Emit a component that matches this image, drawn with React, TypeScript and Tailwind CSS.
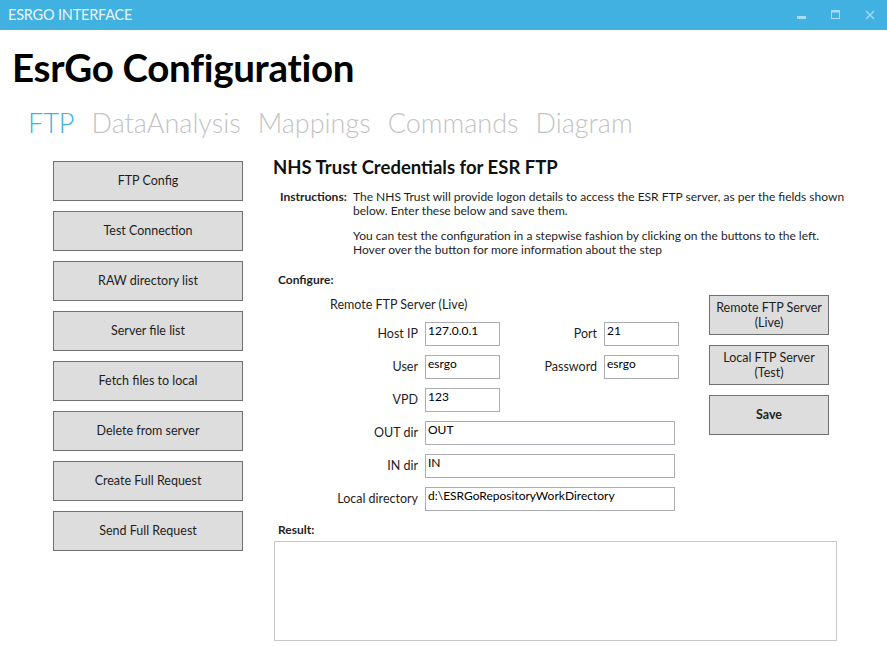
import React from 'react';

const font = { fontFamily: 'Lato, "Noto Sans", sans-serif' };

const leftButtons = [
  'FTP Config',
  'Test Connection',
  'RAW directory list',
  'Server file list',
  'Fetch files to local',
  'Delete from server',
  'Create Full Request',
  'Send Full Request',
];

const tabs = ['FTP', 'DataAnalysis', 'Mappings', 'Commands', 'Diagram'];

const Field: React.FC<{ value: string; wide?: boolean }> = ({ value, wide }) => (
  <div
    className={`h-[24px] ${wide ? 'w-[250px]' : 'w-[75px]'} border border-[#abadb3] bg-white px-[2px] text-[12px] leading-[16px] text-black`}
  >
    {value}
  </div>
);

const Label: React.FC<{ children: React.ReactNode }> = ({ children }) => (
  <div className="text-right text-[12.5px] text-[#1e1e1e]">{children}</div>
);

export default function App() {
  return (
    <div className="w-[887px] h-[646px] bg-white overflow-hidden text-black" style={font}>
      {/* title bar */}
      <div className="h-[30px] bg-[#41b1e1] flex items-center justify-between pl-[8px] pr-[12px]">
        <span className="text-[14.5px] text-[#e8f5fc] tracking-[-0.2px]">ESRGO INTERFACE</span>
        <div className="flex items-center gap-[24px]">
          <svg width="10" height="10" viewBox="0 0 10 10">
            <rect x="0" y="6" width="9" height="3" fill="#a9dcf3" />
          </svg>
          <svg width="10" height="10" viewBox="0 0 10 10">
            <rect x="0.5" y="0.5" width="8" height="8" fill="none" stroke="#a9dcf3" />
            <rect x="0.5" y="0.5" width="8" height="2" fill="#a9dcf3" />
          </svg>
          <svg width="10" height="10" viewBox="0 0 10 10">
            <path d="M1 1 L9 9 M9 1 L1 9" stroke="#a9dcf3" strokeWidth="1.3" />
          </svg>
        </div>
      </div>

      {/* header */}
      <h1 className="pl-[12px] mt-[14px] text-[38.5px] leading-[46px] font-bold tracking-[-0.3px]">EsrGo Configuration</h1>
      <div className="flex gap-[17px] pl-[28px] mt-[16px] text-[27px] leading-[34px] font-light">
        {tabs.map((t, i) => (
          <span key={t} className={i === 0 ? 'text-[#41b1e1]' : 'text-[#c3c3c3]'}>
            {t}
          </span>
        ))}
      </div>

      <div className="flex mt-[17px]">
        {/* left buttons */}
        <div className="ml-[53px] mt-[4px] w-[190px] flex flex-col gap-[10px]">
          {leftButtons.map((b) => (
            <div
              key={b}
              className="h-[40px] border border-[#707070] bg-[#dddddd] flex items-center justify-center text-[12.5px] text-[#1e1e1e]"
            >
              {b}
            </div>
          ))}
        </div>

        {/* right panel */}
        <div className="ml-[30px] w-[580px]">
          <h2 className="text-[18.5px] leading-[20px] font-bold text-[#111]">NHS Trust Credentials for ESR FTP</h2>

          <div className="flex mt-[13px] pl-[7px] text-[12px] leading-[14px] text-[#1e1e1e]">
            <div className="w-[73px] font-bold">Instructions:</div>
            <div className="w-[492px]">
              <p>
                The NHS Trust will provide logon details to access the ESR FTP server, as per the fields shown below.
                Enter these below and save them.
              </p>
              <p className="mt-[11px]">
                You can test the configuration in a stepwise fashion by clicking on the buttons to the left. Hover over
                the button for more information about the step
              </p>
            </div>
          </div>

          <div className="mt-[14px] pl-[5px] text-[12px] font-bold text-[#1e1e1e]">Configure:</div>

          <div className="flex">
            {/* form */}
            <div className="ml-[57px] w-[379px]">
              <div className="mt-[8px] text-[12.5px] leading-[16px] text-[#1e1e1e]">Remote FTP Server (Live)</div>
              <div className="mt-[9px] grid grid-cols-[88px_75px_90px_75px] gap-x-[7px] gap-y-[9px] items-center">
                <Label>Host IP</Label>
                <Field value="127.0.0.1" />
                <Label>Port</Label>
                <Field value="21" />

                <Label>User</Label>
                <Field value="esrgo" />
                <Label>Password</Label>
                <Field value="esrgo" />

                <Label>VPD</Label>
                <Field value="123" />
                <div />
                <div />

                <Label>OUT dir</Label>
                <div className="col-span-3">
                  <Field value="OUT" wide />
                </div>

                <Label>IN dir</Label>
                <div className="col-span-3">
                  <Field value="IN" wide />
                </div>

                <Label>Local directory</Label>
                <div className="col-span-3">
                  <Field value="d:\ESRGoRepositoryWorkDirectory" wide />
                </div>
              </div>
            </div>

            {/* side buttons */}
            <div className="mt-[6px] w-[120px] flex flex-col gap-[10px]">
              <div className="h-[40px] border border-[#707070] bg-[#dddddd] flex items-center justify-center text-center text-[12.5px] leading-[15px] text-[#1e1e1e]">
                Remote FTP Server
                <br />
                (Live)
              </div>
              <div className="h-[40px] border border-[#707070] bg-[#dddddd] flex items-center justify-center text-center text-[12.5px] leading-[15px] text-[#1e1e1e]">
                Local FTP Server
                <br />
                (Test)
              </div>
              <div className="h-[40px] border border-[#707070] bg-[#dddddd] flex items-center justify-center text-[12.5px] font-bold text-[#1e1e1e]">
                Save
              </div>
            </div>
          </div>

          <div className="mt-[10px] pl-[5px] text-[12px] font-bold text-[#1e1e1e]">Result:</div>
          <div className="mt-[2px] ml-[1px] w-[563px] h-[100px] border border-[#c8c8c8] bg-white" />
        </div>
      </div>
    </div>
  );
}
